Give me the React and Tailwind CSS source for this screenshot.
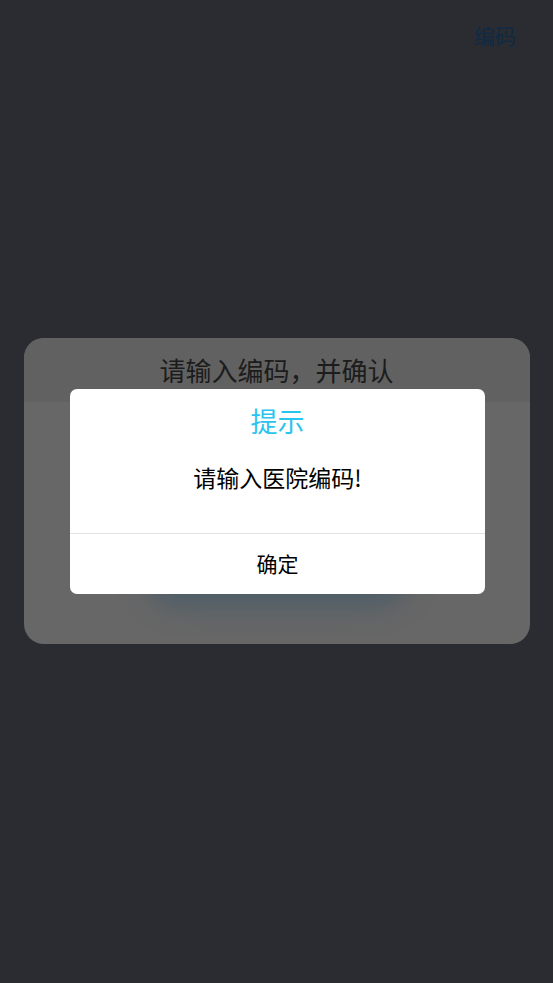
export default function App() {
    return (
        <div
            className="relative h-[983px] w-full overflow-hidden bg-[#2b2c31]"
            style={{ fontFamily: '"Noto Sans CJK SC", "Noto Sans", sans-serif' }}
        >
            <div className="flex h-[72px] items-center justify-end pr-[37px]">
                <span className="text-[21px] text-[#0f2a44]">编码</span>
            </div>

            <div className="flex h-[911px] items-center justify-center pb-[74px]">
                <div className="w-[506px] overflow-hidden rounded-[20px] bg-[#676767]">
                    <div className="flex h-16 items-center justify-center bg-[#616161]">
                        <h2 className="text-[26px] text-[#1c1c1c]">请输入编码，并确认</h2>
                    </div>
                    <div className="flex flex-col items-center px-10 pb-[54px] pt-6">
                        <div className="h-[60px] w-full" />
                        <div className="mt-10 h-[64px] w-[250px] rounded-full bg-[#4c5b66] shadow-[0_6px_24px_12px_rgba(76,93,104,0.9)]" />
                    </div>
                </div>
            </div>

            {/* alert */}
            <div className="absolute left-[70px] top-[389px] w-[415px] overflow-hidden rounded-[7px] bg-white">
                <div className="pt-[13px] text-center text-[27px] leading-[38px] text-[#2ac4ee]">提示</div>
                <div className="flex h-[93px] items-start justify-center pt-[22px] text-[23px] leading-[30px] text-black">
                    请输入医院编码!
                </div>
                <div className="border-t border-[#e2e2e2]">
                    <button className="flex h-[60px] w-full items-center justify-center text-[21px] text-black">
                        确定
                    </button>
                </div>
            </div>
        </div>
    );
}
